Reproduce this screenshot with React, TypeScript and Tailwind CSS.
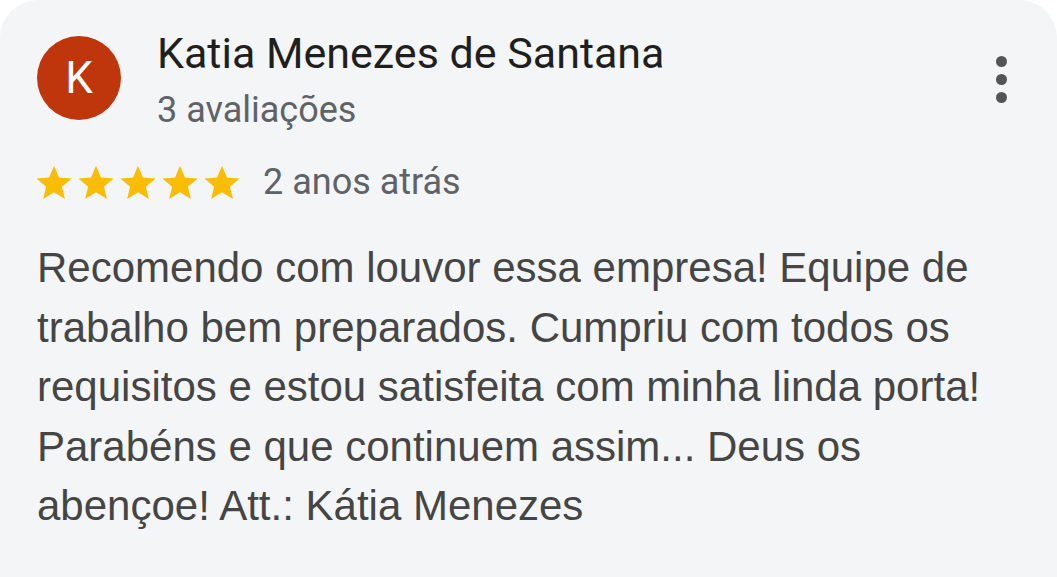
import React from "react";

const Star = () => (
    <svg viewBox="0 0 24 24" className="w-[40px] h-[40px]">
        <path
            fill="#fbbc04"
            d="M12 2.2l2.95 7.05 7.6.6-5.8 4.95 1.8 7.4L12 18.2l-6.55 4 1.8-7.4-5.8-4.95 7.6-.6z"
        />
    </svg>
);

const App = () => {
    return (
        <div className="w-[1057px] h-[577px] bg-white overflow-hidden">
            <div className="w-full h-full bg-[#f4f5f7] rounded-t-[38px] pl-[37px] pr-[50px] pt-[28px]">
                <div className="flex items-start">
                    <div className="mt-[8px] w-[84px] h-[84px] rounded-full bg-[#bf360c] flex items-center justify-center shrink-0">
                        <span className="text-white text-[44px] font-['Roboto',sans-serif] leading-none">K</span>
                    </div>
                    <div className="ml-[36px] flex-1 font-['Roboto',sans-serif]">
                        <h1 className="text-[#1f1f1f] text-[43px] leading-[50px]">
                            Katia Menezes de Santana
                        </h1>
                        <p className="text-[#5f6368] text-[36px] leading-[40px] mt-[12px]">
                            3 avaliações
                        </p>
                    </div>
                    <div className="flex flex-col gap-[7px] pt-[28px]">
                        <span className="w-[11px] h-[11px] rounded-full bg-[#545454]" />
                        <span className="w-[11px] h-[11px] rounded-full bg-[#545454]" />
                        <span className="w-[11px] h-[11px] rounded-full bg-[#545454]" />
                    </div>
                </div>
                <div className="flex items-center h-[40px] mt-[32px]">
                    <div className="flex gap-[2px] -ml-[3px]">
                        <Star />
                        <Star />
                        <Star />
                        <Star />
                        <Star />
                    </div>
                    <span className="ml-[21px] text-[#5f6368] text-[36px] font-['Roboto',sans-serif] leading-[40px]">
                        2 anos atrás
                    </span>
                </div>
                <p className="mt-[36px] text-[#454545] text-[42px] leading-[59.5px] font-['Liberation_Sans',Arial,sans-serif]">
                    Recomendo com louvor essa empresa! Equipe de<br />
                    trabalho bem preparados. Cumpriu com todos os<br />
                    requisitos e estou satisfeita com minha linda porta!<br />
                    Parabéns e que continuem assim... Deus os<br />
                    abençoe! Att.: Kátia Menezes
                </p>
            </div>
        </div>
    );
};

export default App;
